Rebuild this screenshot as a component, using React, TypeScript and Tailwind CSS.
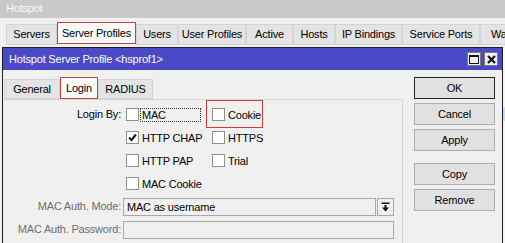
import React from "react";

const outerTabs = [
  { label: "Servers", w: "w-[51px]", active: false },
  { label: "Server Profiles", w: "w-[79px]", active: true },
  { label: "Users", w: "w-[42px]", active: false },
  { label: "User Profiles", w: "w-[68px]", active: false },
  { label: "Active", w: "w-[47px]", active: false },
  { label: "Hosts", w: "w-[42px]", active: false },
  { label: "IP Bindings", w: "w-[67px]", active: false },
  { label: "Service Ports", w: "w-[78px]", active: false },
  { label: "Wal", w: "w-[40px]", active: false },
];

const CheckBox = ({ checked = false }: { checked?: boolean }) => (
  <span className="w-[13px] h-[13px] border border-[#8e8f8f] bg-white flex items-center justify-center shrink-0">
    {checked && (
      <svg width="9" height="9" viewBox="0 0 9 9">
        <path d="M1 4.5 L3.5 7 L8 1.5" fill="none" stroke="#111" strokeWidth="2" />
      </svg>
    )}
  </span>
);

const CheckItem = ({
  label,
  checked,
  focus,
}: {
  label: string;
  checked?: boolean;
  focus?: boolean;
}) => (
  <div className="flex items-center w-[86px]">
    <CheckBox checked={checked} />
    <span
      className={
        focus
          ? "ml-[1px] w-[61px] h-[14px] leading-[12px] px-[1px] border border-dotted border-[#333]"
          : "ml-[3px] leading-[14px]"
      }
    >
      {label}
    </span>
  </div>
);

const WinButton = ({ label, isDefault }: { label: string; isDefault?: boolean }) => (
  <button
    className={
      "h-[22px] w-full bg-[#e1e1e1] text-center leading-[20px] border " +
      (isDefault ? "border-[#262626]" : "border-[#adadad]")
    }
  >
    {label}
  </button>
);

export default function App() {
  return (
    <div className="w-[505px] h-[243px] overflow-hidden bg-[#f0f0f0] text-black text-[11px] tracking-[-0.2px] font-['Liberation_Sans',Arial,sans-serif]">
      {/* parent window title */}
      <div className="h-[18px] bg-[#c9c9c9] text-[#f8f8f8] pl-[6px] leading-[17px]">Hotspot</div>

      {/* parent tabs */}
      <div className="h-[29px] flex items-end pl-[6px] pb-[2px]">
        {outerTabs.map((t) =>
          t.active ? (
            <div
              key={t.label}
              className={t.w + " h-[22px] mb-[1px] bg-[#fbfbfb] border border-[#cf3c3c] flex items-center justify-center shrink-0"}
            >
              {t.label}
            </div>
          ) : (
            <div
              key={t.label}
              className={t.w + " h-[21px] bg-[#e4e4e4] border border-[#d4d4d4] flex items-center justify-center shrink-0"}
            >
              {t.label}
            </div>
          )
        )}
      </div>

      <div className="flex">
        {/* dialog window */}
        <div className="ml-[2px] w-[501px] h-[200px] border border-[#1e1e1e] bg-[#f0f0f0] flex flex-col shrink-0">
          <div className="h-[22px] bg-[#4a4ac6] flex items-center pl-[6px] pr-[4px]">
            <span className="text-white flex-1">Hotspot Server Profile &lt;hsprof1&gt;</span>
            <div className="w-[14px] h-[14px] bg-[#f0f0f0] border border-[#7a7a7a] flex items-center justify-center">
              <svg width="10" height="9" viewBox="0 0 10 9">
                <rect x="0.5" y="0.5" width="9" height="8" fill="none" stroke="#111" strokeWidth="1" />
                <rect x="0" y="0" width="10" height="2" fill="#111" />
              </svg>
            </div>
            <div className="ml-[3px] w-[14px] h-[14px] bg-[#f0f0f0] border border-[#7a7a7a] flex items-center justify-center">
              <svg width="9" height="9" viewBox="0 0 9 9">
                <path d="M1 1 L8 8 M8 1 L1 8" stroke="#111" strokeWidth="2.2" />
              </svg>
            </div>
          </div>

          <div className="flex flex-1">
            {/* left side: tabs + form */}
            <div className="w-[400px] pt-[8px] flex flex-col">
              <div className="flex items-end h-[21px] pl-[1px]">
                <div className="w-[56px] h-[20px] bg-[#e4e4e4] border border-[#d4d4d4] flex items-center justify-center">
                  General
                </div>
                <div className="w-[38px] h-[22px] bg-[#fbfbfb] border border-[#cf3c3c] flex items-center justify-center">
                  Login
                </div>
                <div className="w-[55px] h-[20px] bg-[#e4e4e4] border border-[#d4d4d4] flex items-center justify-center">
                  RADIUS
                </div>
              </div>

              <div className="flex-1 ml-[1px] border-t border-r border-[#d6d6d6] pt-[3px] flex flex-col">
                <div className="h-[23px] flex items-center">
                  <span className="w-[117px] text-right">Login By:</span>
                  <div className="ml-[5px] flex items-center">
                    <CheckItem label="MAC" focus />
                    <div className="relative">
                      <CheckItem label="Cookie" />
                      <div className="absolute left-[-6px] top-[-8px] w-[57px] h-[28px] border border-[#cf3c3c]" />
                    </div>
                  </div>
                </div>
                <div className="h-[23px] flex items-center">
                  <span className="w-[117px]" />
                  <div className="ml-[5px] flex items-center">
                    <CheckItem label="HTTP CHAP" checked />
                    <CheckItem label="HTTPS" />
                  </div>
                </div>
                <div className="h-[23px] flex items-center">
                  <span className="w-[117px]" />
                  <div className="ml-[5px] flex items-center">
                    <CheckItem label="HTTP PAP" />
                    <CheckItem label="Trial" />
                  </div>
                </div>
                <div className="h-[23px] flex items-center">
                  <span className="w-[117px]" />
                  <div className="ml-[5px] flex items-center">
                    <CheckItem label="MAC Cookie" />
                  </div>
                </div>
                <div className="h-[23px] flex items-center">
                  <span className="w-[117px] text-right text-[#6d6d6d]">MAC Auth. Mode:</span>
                  <div className="ml-[2px] w-[253px] h-[18px] border border-[#a8a8a8] bg-[#f0f0f0] leading-[16px] pl-[3px]">
                    MAC as username
                  </div>
                  <div className="ml-[1px] w-[17px] h-[18px] border border-[#a8a8a8] bg-[#f0f0f0] flex items-center justify-center">
                    <svg width="9" height="10" viewBox="0 0 9 10">
                      <rect x="0.5" y="0.5" width="8" height="1.5" fill="#111" />
                      <rect x="3.5" y="3" width="2" height="3" fill="#111" />
                      <path d="M1 5.5 L8 5.5 L4.5 9.5 Z" fill="#111" />
                    </svg>
                  </div>
                </div>
                <div className="h-[23px] flex items-center">
                  <span className="w-[117px] text-right text-[#6d6d6d]">MAC Auth. Password:</span>
                  <div className="ml-[2px] w-[271px] h-[18px] border border-[#a8a8a8] bg-[#f0f0f0]" />
                </div>
              </div>
            </div>

            {/* right side: buttons */}
            <div className="ml-[11px] w-[81px] pt-[7px] flex flex-col gap-[4px]">
              <WinButton label="OK" isDefault />
              <WinButton label="Cancel" />
              <WinButton label="Apply" />
              <div className="h-[4px]" />
              <WinButton label="Copy" />
              <WinButton label="Remove" />
            </div>
          </div>
        </div>

        {/* glimpse of the parent list behind the dialog */}
        <div className="flex-1 flex flex-col">
          <div className="h-[60px] bg-[#f7f7f7]" />
          <div className="h-[14px] bg-[#cbdcf2]" />
          <div className="flex-1 bg-[#f7f7f7]" />
        </div>
      </div>
    </div>
  );
}
